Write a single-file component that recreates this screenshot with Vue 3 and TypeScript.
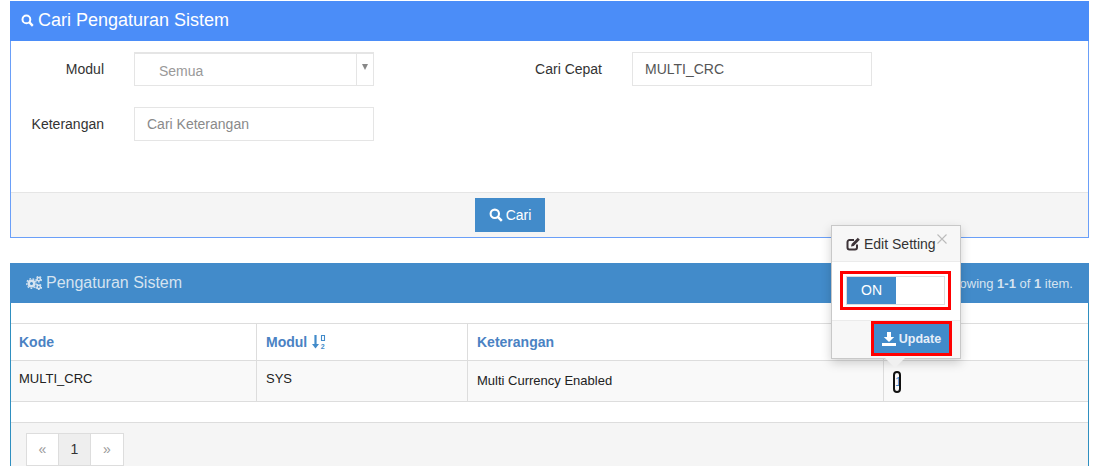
<script setup lang="ts">
const pages = ['«', '1', '»']
</script>

<template>
  <div class="page">
    <section class="panel search">
      <header class="head search-head">
        <svg class="ic" width="13" height="13" viewBox="0 0 13 13"><circle cx="5.4" cy="5.4" r="3.9" fill="none" stroke="#fff" stroke-width="2"/><path d="M8.2 8.2l3.6 3.6" stroke="#fff" stroke-width="2.4"/></svg>
        <span>Cari Pengaturan Sistem</span>
      </header>
      <div class="form">
        <div class="form-row">
          <label class="lbl">Modul</label>
          <div class="select">
            <span class="select-val">Semua</span>
            <span class="select-arrow"><i></i></span>
          </div>
          <label class="lbl lbl2">Cari Cepat</label>
          <div class="input val">MULTI_CRC</div>
        </div>
        <div class="form-row">
          <label class="lbl">Keterangan</label>
          <div class="input ph">Cari Keterangan</div>
        </div>
      </div>
      <footer class="search-foot">
        <button class="btn cari">
          <svg width="14" height="14" viewBox="0 0 14 14"><circle cx="5.8" cy="5.8" r="4.2" fill="none" stroke="#fff" stroke-width="2.1"/><path d="M8.8 8.8l4 4" stroke="#fff" stroke-width="2.5"/></svg>
          Cari
        </button>
      </footer>
    </section>

    <section class="panel result">
      <header class="head result-head">
        <div class="title">
          <svg width="16" height="14" viewBox="0 0 16 14"><g fill="#d5e3f0"><circle cx="5.500" cy="7.500" r="4"/><circle cx="12.800" cy="3.200" r="2.400"/><circle cx="12.800" cy="11" r="2.400"/></g><g fill="none" stroke="#d5e3f0" stroke-width="1.300" stroke-dasharray="1.800 1.500"><circle cx="5.500" cy="7.500" r="4.800"/><circle cx="12.800" cy="3.200" r="2.700"/><circle cx="12.800" cy="11" r="2.700"/></g><circle cx="5.500" cy="7.500" r="1.500" fill="#428bca"/><circle cx="12.800" cy="3.200" r=".9" fill="#428bca"/><circle cx="12.800" cy="11" r=".9" fill="#428bca"/></svg>
          <span>Pengaturan Sistem</span>
        </div>
        <div class="summary">Showing <b>1-1</b> of <b>1</b> item.</div>
      </header>
      <div class="gap-top"></div>
      <div class="grid thead">
        <div class="cell c1"><a>Kode</a></div>
        <div class="cell c2">
          <a>Modul</a>
          <svg class="sort" width="14" height="16" viewBox="0 0 14 16"><path d="M3.500 1v10" stroke="#428bca" stroke-width="2.200"/><path d="M0 10h7l-3.500 4.500z" fill="#428bca"/><path d="M9.500 1.500h3v5h-3z" fill="none" stroke="#428bca" stroke-width="1.100"/><text x="8.800" y="15" class="sort-t">2</text></svg>
        </div>
        <div class="cell c3"><a>Keterangan</a></div>
        <div class="cell c4"></div>
      </div>
      <div class="grid tbody">
        <div class="cell c1 up">MULTI_CRC</div>
        <div class="cell c2 up">SYS</div>
        <div class="cell c3 low">Multi Currency Enabled</div>
        <div class="cell c4"><span class="focus-one">1</span></div>
      </div>
      <div class="gap-bottom"></div>
      <footer class="result-foot">
        <ul class="pager">
          <li v-for="p in pages" :key="p" :class="{ active: p === '1' }">{{ p }}</li>
        </ul>
      </footer>
    </section>

    <aside class="pop">
      <div class="pop-head">
        <svg width="15" height="14" viewBox="0 0 15 14"><path d="M11 7.500v3A2 2 0 0 1 9 12.500H3.500a2 2 0 0 1-2-2V5a2 2 0 0 1 2-2H8" fill="none" stroke="#3d3338" stroke-width="2"/><path d="M5 9.500l.6-2.600L11.800.8l2 2-6.100 6.100z" fill="#3d3338"/></svg>
        <span>Edit Setting</span>
        <svg class="close" width="10" height="10" viewBox="0 0 10 10"><path d="M.5.5l9 9M9.500.5l-9 9" stroke="#bbb" stroke-width="1.100"/></svg>
      </div>
      <div class="pop-body">
        <div class="red toggle-box">
          <div class="toggle"><span class="on">ON</span></div>
        </div>
      </div>
      <div class="pop-foot">
        <div class="red update-box">
          <button class="btn update">
            <svg width="14" height="14" viewBox="0 0 14 14"><path d="M5 0h4v5h3.200L7 10 1.800 5H5z" fill="#fff"/><path d="M0 11h14v3H0z" fill="#fff"/></svg>
            Update
          </button>
        </div>
      </div>
      <span class="arrow"></span>
    </aside>
  </div>
</template>

<style>
html, body { margin: 0; background: #fff; overflow: hidden; }
</style>

<style scoped>
.page {
  position: relative;
  height: 466px;
  overflow: hidden;
  padding: 1px 6px 0 10px;
  font-family: "Liberation Sans", Arial, sans-serif;
  font-size: 14px;
  color: #333;
  box-sizing: border-box;
}
.panel { box-sizing: border-box; }
.search { height: 237px; border: 1px solid #6a9ff8; border-top: 0; display: flex; flex-direction: column; }
.head { display: flex; align-items: center; height: 40px; color: #fff; box-sizing: border-box; }
.search-head { background: #4b8df8; margin: 0 -1px; padding: 0 0 2px 11px; font-size: 18px; gap: 4px; }
.form { flex: 1; padding-top: 11px; }
.form-row { display: flex; align-items: center; height: 34px; margin-bottom: 21px; }
.lbl { width: 93px; text-align: right; flex: none; }
.lbl2 { width: 228px; }
.select { margin-left: 30px; width: 240px; height: 34px; box-sizing: border-box; border: 1px solid #e5e5e5; border-top-width: 2px; display: flex; color: #999; }
.select-val { flex: 1; padding: 9px 0 0 24px; }
.select-arrow { width: 17px; border-left: 1px solid #e5e5e5; display: flex; justify-content: center; padding-top: 10px; box-sizing: border-box; }
.select-arrow i { width: 0; height: 0; border: 3.500px solid transparent; border-top: 6px solid #888; }
.input { margin-left: 30px; width: 240px; height: 34px; box-sizing: border-box; border: 1px solid #e5e5e5; padding: 0 12px; line-height: 32px; }
.lbl2 + .input { margin-left: 30px; }
.val { color: #555; }
.ph { color: #8a8a8a; }
.search-foot { height: 45px; background: #f5f5f5; border-top: 1px solid #e5e5e5; display: flex; padding: 5px 0 0 464px; box-sizing: border-box; }
.btn { border: 0; background: #428bca; color: #fff; font: 14px "Liberation Sans", Arial, sans-serif; display: inline-flex; align-items: center; justify-content: center; }
.cari { width: 70px; height: 34px; gap: 3px; }

.result { margin-top: 25px; border: 1px solid #2f8fc0; border-top: 0; height: 210px; position: relative; }
.result-head { background: #428bca; margin: 0 -1px; padding: 0 16px; justify-content: space-between; }
.title { display: flex; align-items: center; gap: 4px; font-size: 16px; color: #d5e3f0; }
.summary { font-size: 13px; color: #d5e3f0; }
.gap-top { height: 20px; }
.grid { display: grid; grid-template-columns: 246px 211px 416px 1fr; border-top: 1px solid #ddd; box-sizing: border-box; }
.thead { height: 37px; }
.tbody { height: 42px; background: #f9f9f9; border-bottom: 1px solid #ddd; }
.cell { padding-left: 8px; border-right: 1px solid #ddd; display: flex; align-items: center; font-size: 13px; color: #222; box-sizing: border-box; }
.c2, .c3 { padding-left: 9px; }
.cell:last-child { border-right: 0; }
.cell a { font-weight: 700; font-size: 14px; color: #4a82c3; }
.c2 { gap: 5px; }
.sort-t { font: 700 7px "Liberation Sans", Arial, sans-serif; fill: #428bca; }
.up { padding-bottom: 6px; }
.low { padding-bottom: 1px; }
.c4 { padding-left: 9px; padding-top: 1px; }
.focus-one { width: 8px; height: 22px; box-sizing: border-box; border: 2px solid #111; border-radius: 4px; font-size: 12px; line-height: 18px; color: #428bca; text-align: center; overflow: hidden; }
.gap-bottom { height: 20px; }
.result-foot { background: #f5f5f5; border-top: 1px solid #ddd; height: 60px; padding: 10px 0 0 15px; box-sizing: border-box; }
.pager { list-style: none; margin: 0; padding: 0; display: flex; width: 98px; height: 33px; box-sizing: border-box; border: 1px solid #ddd; background: #fff; }
.pager li { width: 32px; flex: none; text-align: center; line-height: 30px; color: #999; border-right: 1px solid #ddd; font-size: 14px; box-sizing: border-box; }
.pager li:last-child { border-right: 0; }
.pager .active { background: #eee; color: #333; }

.pop { position: absolute; left: 831px; top: 225px; width: 130px; height: 134px; box-sizing: border-box; background: #fff; border: 1px solid #c8c8c8; box-shadow: 0 4px 10px rgba(0,0,0,.18); }
.pop-head { height: 36px; background: #f7f7f7; border-bottom: 1px solid #ebebeb; display: flex; align-items: center; padding: 0 0 0 14px; gap: 3px; box-sizing: border-box; color: #333; font-size: 14px; position: relative; white-space: nowrap; }
.close { position: absolute; left: 105px; top: 8px; }
.pop-body { height: 58px; padding: 9px 0 0 8px; box-sizing: border-box; }
.red { border: 3px solid #f00; box-sizing: border-box; background: #fff; }
.toggle-box { width: 111px; height: 39px; padding: 2px 3px; }
.toggle { height: 29px; border: 1px solid #ddd; box-sizing: border-box; }
.on { display: block; width: 49px; height: 27px; background: #428bca; color: #fff; text-align: center; line-height: 27px; font-size: 14px; }
.pop-foot { height: 38px; background: #f7f7f7; border-top: 1px solid #ebebeb; box-sizing: border-box; position: relative; }
.update-box { position: absolute; left: 39px; top: 0; width: 81px; height: 35px; padding: 0; background: #428bca; }
.update { width: 75px; height: 29px; gap: 3px; font-size: 12.500px; font-weight: 700; color: #e6eef8; }
.arrow { position: absolute; left: 53px; bottom: -10px; width: 0; height: 0; border: 10px solid transparent; border-bottom: 0; border-top: 10px solid #f0f0f0; }
</style>
